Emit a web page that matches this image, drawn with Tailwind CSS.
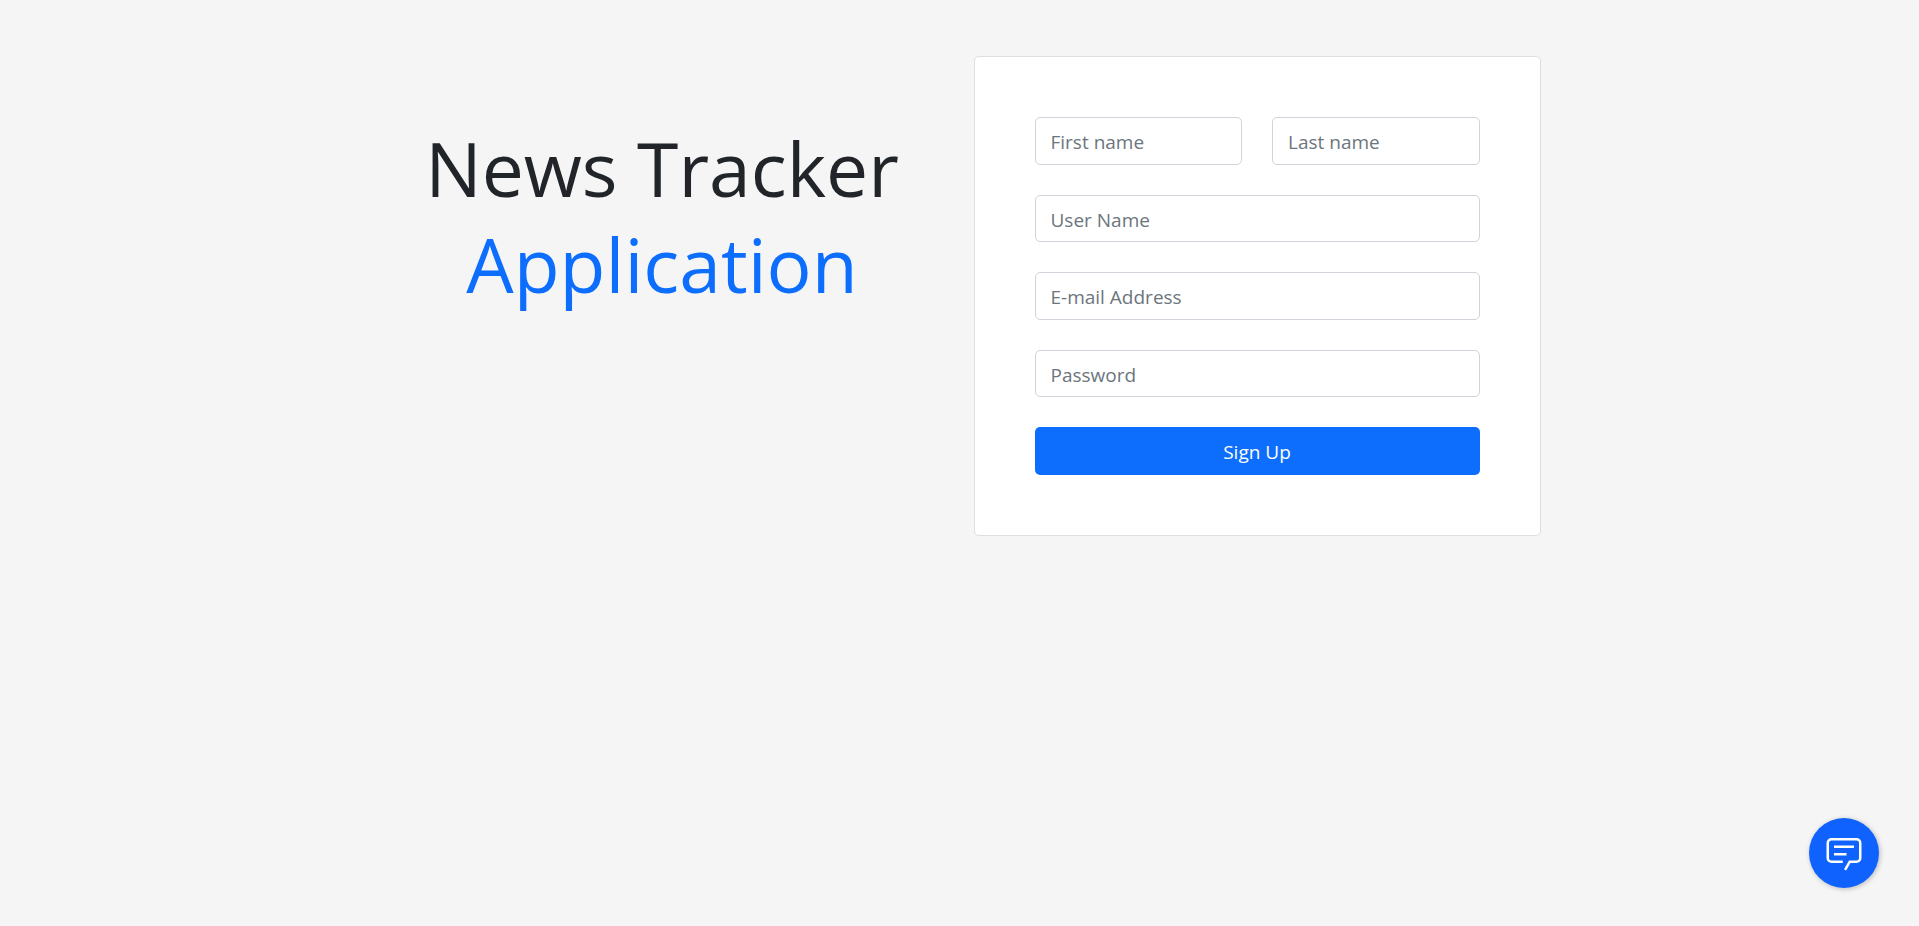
<!DOCTYPE html>
<html lang="en">
<head>
<meta charset="utf-8">
<meta name="viewport" content="width=device-width, initial-scale=1">
<title>News Tracker Application</title>
<script src="https://cdn.jsdelivr.net/npm/@tailwindcss/browser@4"></script>
</head>
<body class="min-h-screen bg-[#f5f5f5] font-['Open_Sans','Noto_Sans',sans-serif] text-[19px] leading-[30px] text-[#212529]">
<main class="mx-auto grid max-w-[1222px] items-start gap-7 px-[30px] pt-14 lg:grid-cols-2">
<h1 class="pt-[64px] text-center text-[75px] leading-[96px]"><span class="block">News Tracker</span><span class="block text-[#0d6efd]">Application</span></h1>
<form class="flex flex-col gap-[30px] rounded-[5px] border border-[#dfdfdf] bg-white p-[60px]">
<div class="grid grid-cols-2 gap-[30px]">
<input type="text" aria-label="First name" placeholder="First name" class="h-12 w-full min-w-0 rounded-[5px] border border-[#ced4da] bg-white px-[15px] pt-[2px] placeholder:text-[#6c757d]">
<input type="text" aria-label="Last name" placeholder="Last name" class="h-12 w-full min-w-0 rounded-[5px] border border-[#ced4da] bg-white px-[15px] pt-[2px] placeholder:text-[#6c757d]">
</div>
<input type="text" aria-label="User Name" placeholder="User Name" class="h-[47px] rounded-[5px] border border-[#ced4da] bg-white px-[15px] pt-[2px] placeholder:text-[#6c757d]">
<input type="email" aria-label="E-mail Address" placeholder="E-mail Address" class="h-12 rounded-[5px] border border-[#ced4da] bg-white px-[15px] pt-[2px] placeholder:text-[#6c757d]">
<input type="password" aria-label="Password" placeholder="Password" class="h-[47px] rounded-[5px] border border-[#ced4da] bg-white px-[15px] pt-[2px] placeholder:text-[#6c757d]">
<button type="submit" class="h-12 rounded-[5px] bg-[#0d6efd] pt-[2px] text-white">Sign Up</button>
</form>
</main>
<button type="button" aria-label="Open chat" class="fixed right-10 bottom-[38px] flex size-[70px] items-center justify-center rounded-full bg-[#0f62fe] text-white shadow-[1px_1px_5px_rgba(0,0,0,0.25)]">
<svg class="size-10" viewBox="0 0 32 32" fill="currentColor" aria-hidden="true">
<path d="M17.74 30 16 29l4-7h6a2 2 0 0 0 2-2V8a2 2 0 0 0-2-2H6a2 2 0 0 0-2 2v12a2 2 0 0 0 2 2h9v2H6a4 4 0 0 1-4-4V8a4 4 0 0 1 4-4h20a4 4 0 0 1 4 4v12a4 4 0 0 1-4 4h-4.84Z"/>
<path d="M8 10h16v2H8zM8 16h10v2H8z"/>
</svg>
</button>
</body>
</html>
